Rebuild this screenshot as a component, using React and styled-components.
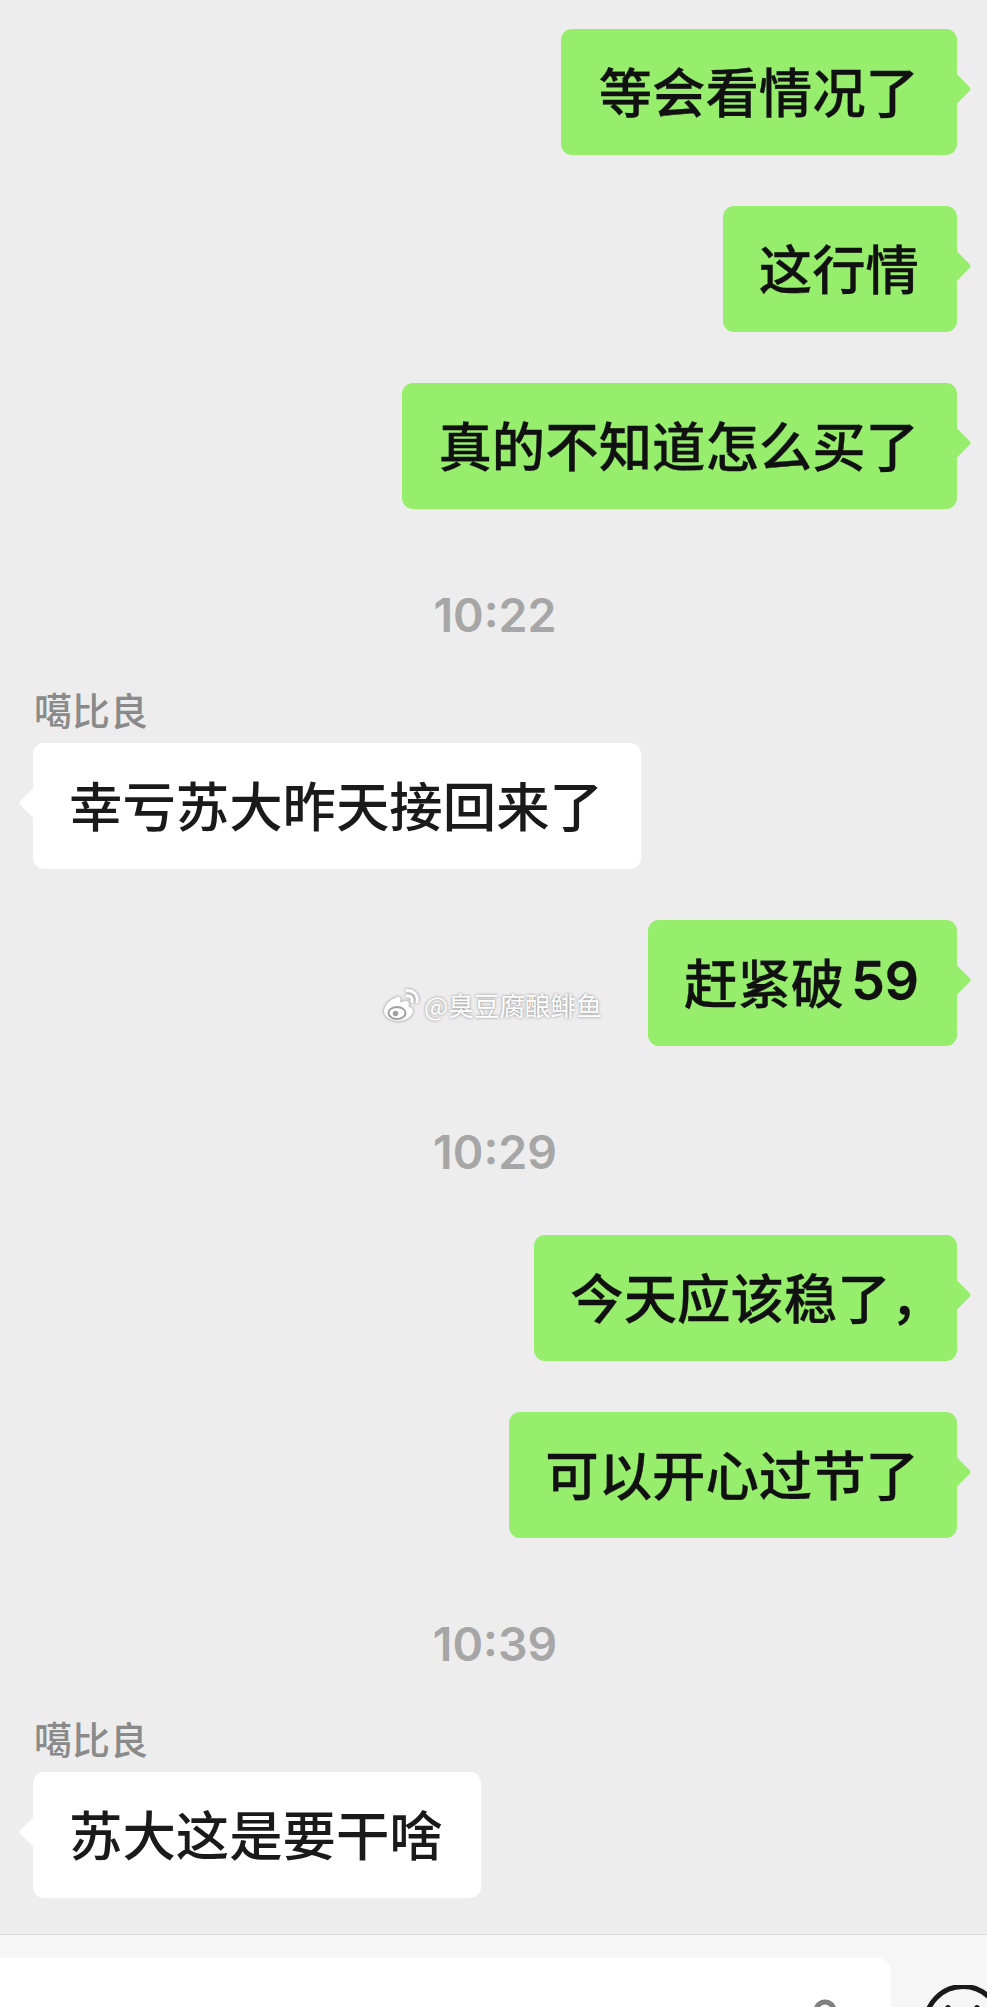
import styled, { createGlobalStyle } from "styled-components";

const GlobalStyle = createGlobalStyle`
  html, body {
    margin: 0;
    padding: 0;
    background: #ededed;
  }
`;

const Screen = styled.div`
  width: 987px;
  height: 2007px;
  position: relative;
  overflow: hidden;
  display: flex;
  flex-direction: column;
  background: #ededed;
  font-family: "Noto Sans CJK SC", "Noto Sans", sans-serif;
`;

const Chat = styled.div`
  flex: 1;
  display: flex;
  flex-direction: column;
  padding: 29px 30px 0 33px;
`;

const Row = styled.div`
  display: flex;
  flex-direction: column;
  align-items: ${(p) => (p.$mine ? "flex-end" : "flex-start")};
  margin-bottom: ${(p) => p.$gap ?? 51}px;
`;

const Name = styled.div`
  font-size: 38px;
  font-weight: 500;
  line-height: 44px;
  height: 44px;
  margin: -12px 0 12px 1px;
  color: #8a8a8a;
`;

const Bubble = styled.div`
  position: relative;
  height: 126px;
  box-sizing: border-box;
  padding: 0 38px 5px ${(p) => p.$padLeft ?? 36}px;
  display: flex;
  align-items: center;
  border-radius: 11px;
  font-size: 53.4px;
  font-weight: 500;
  white-space: nowrap;
  -webkit-text-stroke: ${(p) => (p.$mine ? "0.3px" : "0")};
  color: ${(p) => (p.$mine ? "#111" : "#1a1a1a")};
  background: ${(p) => (p.$mine ? "#97ed6c" : "#fff")};

  &::after {
    content: "";
    position: absolute;
    top: 49px;
    width: 22px;
    height: 22px;
    border-radius: 3px;
    transform: rotate(45deg);
    background: inherit;
    ${(p) => (p.$mine ? "right: -10px;" : "left: -10px;")}
  }
`;

const Latin = styled.span`
  font-family: Inter, sans-serif;
  font-weight: 600;
  margin-left: 7px;
`;

const Comma = styled.span`
  letter-spacing: -25px;
`;

const Time = styled.div`
  text-align: center;
  font-family: Inter, sans-serif;
  font-size: 46.5px;
  font-weight: 600;
  line-height: 54px;
  color: #a6a6a6;
  margin-bottom: ${(p) => p.$gap}px;
`;

const Footer = styled.div`
  height: 73px;
  flex: none;
  display: flex;
  justify-content: space-between;
  padding-top: 23px;
  box-sizing: border-box;
  background: #f6f6f6;
  border-top: 1px solid #dcdcdc;
`;

const Input = styled.div`
  width: 891px;
  height: 80px;
  background: #fff;
  border-radius: 0 14px 0 0;
  position: relative;
`;

const InputIcon = styled.svg`
  position: absolute;
  right: 51px;
  top: 40px;
`;

const Smiley = styled.svg`
  margin-top: 27px;
  flex: none;
`;

const Watermark = styled.div`
  position: absolute;
  left: 382px;
  top: 985px;
  display: flex;
  align-items: center;
  gap: 4px;
  font-size: 25.6px;
  line-height: 40px;
  color: #fff;
  text-shadow: 0 0 3px rgba(0, 0, 0, 0.45);
`;

const LogoIcon = styled.svg`
  flex: none;
  filter: drop-shadow(0 0 1.5px rgba(0, 0, 0, 0.45));
`;

function WeiboLogo() {
  return (
    <LogoIcon width="38" height="34" viewBox="0 0 38 34" fill="none">
      <path
        d="M15 9C9 11 2 17 2 23C2 29 9 33 16 33C24 33 31 28 31 23C31 20 28 19 26.500 18.500C27.500 16 27 13 23.500 13C21.500 13 19.500 14 18.500 14.500C19 11 18.500 8 15 9Z"
        fill="#fff"
      />
      <ellipse cx="15" cy="25" rx="8.500" ry="6" fill="#fff" stroke="#a0a0a0" strokeWidth="2" />
      <circle cx="13.500" cy="25.500" r="2.800" fill="#a0a0a0" />
      <path d="M25 2.500C31 2 36.500 7 35 14" stroke="#fff" strokeWidth="3" strokeLinecap="round" />
      <path d="M25 8C28.500 7.500 31 10 30 13.500" stroke="#fff" strokeWidth="3" strokeLinecap="round" />
    </LogoIcon>
  );
}

export default function App() {
  return (
    <Screen>
      <GlobalStyle />
      <Chat>
        <Row $mine $gap={51}>
          <Bubble $mine $padLeft={38}>等会看情况了</Bubble>
        </Row>
        <Row $mine $gap={51}>
          <Bubble $mine>这行情</Bubble>
        </Row>
        <Row $mine $gap={79}>
          <Bubble $mine>真的不知道怎么买了</Bubble>
        </Row>
        <Time $gap={57}>10:22</Time>
        <Row $gap={51}>
          <Name>噶比良</Name>
          <Bubble>幸亏苏大昨天接回来了</Bubble>
        </Row>
        <Row $mine $gap={79}>
          <Bubble $mine>
            赶紧破<Latin>59</Latin>
          </Bubble>
        </Row>
        <Time $gap={56}>10:29</Time>
        <Row $mine $gap={51}>
          <Bubble $mine>
            今天应该稳了<Comma>，</Comma>
          </Bubble>
        </Row>
        <Row $mine $gap={79}>
          <Bubble $mine>可以开心过节了</Bubble>
        </Row>
        <Time $gap={57}>10:39</Time>
        <Row $gap={0}>
          <Name>噶比良</Name>
          <Bubble>苏大这是要干啥</Bubble>
        </Row>
      </Chat>
      <Footer>
        <Input>
          <InputIcon width="30" height="40" viewBox="0 0 30 40" fill="none">
            <circle cx="15" cy="13" r="9" stroke="#808080" strokeWidth="5" />
          </InputIcon>
        </Input>
        <Smiley width="96" height="96" viewBox="0 0 96 96" fill="none">
          <circle cx="72" cy="39" r="37.500" stroke="#1a1a1a" strokeWidth="5" />
          <ellipse cx="57" cy="25" rx="3.500" ry="5" fill="#1a1a1a" />
          <ellipse cx="86" cy="25" rx="3.500" ry="5" fill="#1a1a1a" />
        </Smiley>
      </Footer>
      <Watermark>
        <WeiboLogo />
        <span>@臭豆腐酿鲱鱼</span>
      </Watermark>
    </Screen>
  );
}
